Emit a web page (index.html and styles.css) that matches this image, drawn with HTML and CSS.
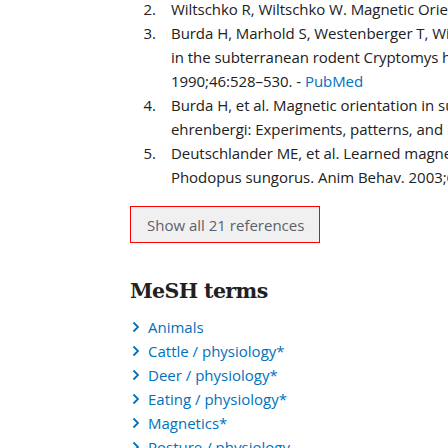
FILE: index.html
```html
<!DOCTYPE html>
<html>
<head>
<meta charset="utf-8">
<link rel="stylesheet" href="styles.css">
</head>
<body>
<div class="page">
  <ol class="refs">
    <li class="ref"><span class="num">2.</span><span class="txt">Wiltschko R, Wiltschko W. Magnetic Orientation in Animals.</span></li>
    <li class="ref"><span class="num">3.</span><span class="txt">Burda H, Marhold S, Westenberger T, Wiltschko R, Wiltschko W. Magnetic compass orientation<br>in the subterranean rodent Cryptomys hottentotus (Bathyergidae). Experientia.<br>1990;46:528–530. - <a class="link" href="#">PubMed</a></span></li>
    <li class="ref"><span class="num">4.</span><span class="txt">Burda H, et al. Magnetic orientation in subterranean mole-rats Cryptomys<br>ehrenbergi: Experiments, patterns, and mechanisms.</span></li>
    <li class="ref"><span class="num">5.</span><span class="txt">Deutschlander ME, et al. Learned magnetic compass orientation by the Siberian hamster,<br>Phodopus sungorus. Anim Behav. 2003;65:779–786.</span></li>
  </ol>
  <button class="show-all">Show all 21 references</button>
  <h2 class="heading">MeSH terms</h2>
  <ul class="mesh">
    <li class="term"><svg class="chev" width="8" height="12" viewBox="0 0 8 12"><path d="M1.5 1.5 L6 6 L1.5 10.5" fill="none" stroke="#0071bc" stroke-width="1.8"/></svg><span>Animals</span></li>
    <li class="term"><svg class="chev" width="8" height="12" viewBox="0 0 8 12"><path d="M1.5 1.5 L6 6 L1.5 10.5" fill="none" stroke="#0071bc" stroke-width="1.8"/></svg><span>Cattle / physiology*</span></li>
    <li class="term"><svg class="chev" width="8" height="12" viewBox="0 0 8 12"><path d="M1.5 1.5 L6 6 L1.5 10.5" fill="none" stroke="#0071bc" stroke-width="1.8"/></svg><span>Deer / physiology*</span></li>
    <li class="term"><svg class="chev" width="8" height="12" viewBox="0 0 8 12"><path d="M1.5 1.5 L6 6 L1.5 10.5" fill="none" stroke="#0071bc" stroke-width="1.8"/></svg><span>Eating / physiology*</span></li>
    <li class="term"><svg class="chev" width="8" height="12" viewBox="0 0 8 12"><path d="M1.5 1.5 L6 6 L1.5 10.5" fill="none" stroke="#0071bc" stroke-width="1.8"/></svg><span>Magnetics*</span></li>
    <li class="term"><svg class="chev" width="8" height="12" viewBox="0 0 8 12"><path d="M1.5 1.5 L6 6 L1.5 10.5" fill="none" stroke="#0071bc" stroke-width="1.8"/></svg><span>Posture / physiology</span></li>
  </ul>
</div>
</body>
</html>
```
FILE: styles.css
```css
html, body {
  margin: 0;
  padding: 0;
  background: #fff;
  overflow: hidden;
  width: 448px;
  height: 448px;
}
.page {
  padding-left: 130px;
  margin-top: -3px;
  font-family: "Open Sans", "Noto Sans", sans-serif;
  font-size: 15px;
  line-height: 24px;
  color: #212121;
}
.refs {
  list-style: none;
  margin: 0;
  padding: 0;
}
.ref {
  display: flex;
  white-space: nowrap;
}
.num {
  width: 26px;
  text-align: right;
  flex: none;
}
.txt {
  margin-left: 15px;
  letter-spacing: -0.05px;
}
.link {
  color: #0071bc;
  text-decoration: none;
}
.show-all {
  display: block;
  margin-top: 17px;
  width: 190px;
  height: 37px;
  padding: 0 0 0 16px;
  text-align: left;
  background: #f0f0f0;
  border: 1px solid #ff0000;
  border-radius: 0;
  font-family: "Open Sans", "Noto Sans", sans-serif;
  font-size: 15px;
  color: #5b616b;
}
.heading {
  margin: 34px 0 0;
  font-family: "DejaVu Serif", serif;
  font-weight: bold;
  font-size: 20.5px;
  letter-spacing: -0.6px;
  line-height: 28px;
  color: #212121;
}
.mesh {
  list-style: none;
  margin: 10px 0 0;
  padding: 0;
}
.term {
  display: flex;
  align-items: center;
  height: 24px;
  white-space: nowrap;
  color: #0071bc;
}
.chev {
  margin-left: 2px;
  margin-right: 8px;
  flex: none;
}
```
